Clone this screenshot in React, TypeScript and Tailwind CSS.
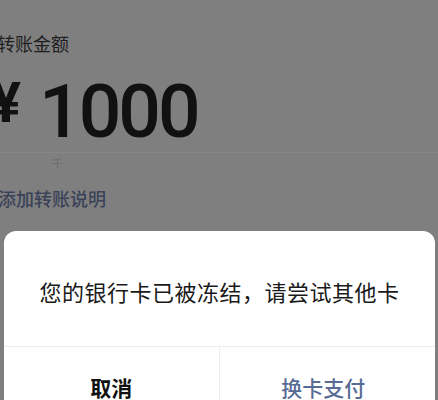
import React from 'react';

const cjk = { fontFamily: '"Noto Sans CJK SC", "Noto Sans", sans-serif' };
const num = { fontFamily: 'Roboto, "Liberation Sans", Arial, sans-serif' };

const App = () => {
  return (
    <div className="relative w-[438px] h-[400px] overflow-hidden bg-[#7f7f7f]" style={cjk}>
      <div className="pt-[33px]">
        <div className="-ml-[3px] text-[18px] leading-[20px] text-[#1e1e1e]">转账金额</div>
        <div className="mt-[21px] flex items-start h-[75px]">
          <span className="-ml-[9px] mt-[1px] text-[56px] leading-none font-bold text-[#111]" style={num}>
            ¥
          </span>
          <span className="ml-[18px] text-[75px] leading-none font-medium tracking-[-3px] text-[#111]" style={num}>
            1000
          </span>
        </div>
        <div className="mt-[3px] h-px bg-[#868686]" />
        <div className="ml-[52px] mt-[4px] text-[11px] leading-[12px] text-[#6c6c6c]">千</div>
        <div className="-ml-[2px] mt-[19px] text-[18px] leading-[20px] font-medium text-[#3a4258]">
          添加转账说明
        </div>
      </div>

      <div className="mt-[23px] ml-[4px] w-[431px] rounded-[12px] bg-white">
        <div className="h-[116px] flex items-center justify-center pt-[4px] border-b border-[#ededed]">
          <span className="text-[22px] leading-[26px] tracking-[0.5px] text-[#1a1a1a]">
            您的银行卡已被冻结，请尝试其他卡
          </span>
        </div>
        <div className="grid grid-cols-2 h-[80px]">
          <div className="flex items-center justify-center border-r border-[#ededed]">
            <span className="text-[21px] leading-[24px] font-bold text-[#111]">取消</span>
          </div>
          <div className="flex items-center justify-center pr-[8px]">
            <span className="text-[21px] leading-[24px] font-medium text-[#576b95]">换卡支付</span>
          </div>
        </div>
      </div>
    </div>
  );
};

export default App;
